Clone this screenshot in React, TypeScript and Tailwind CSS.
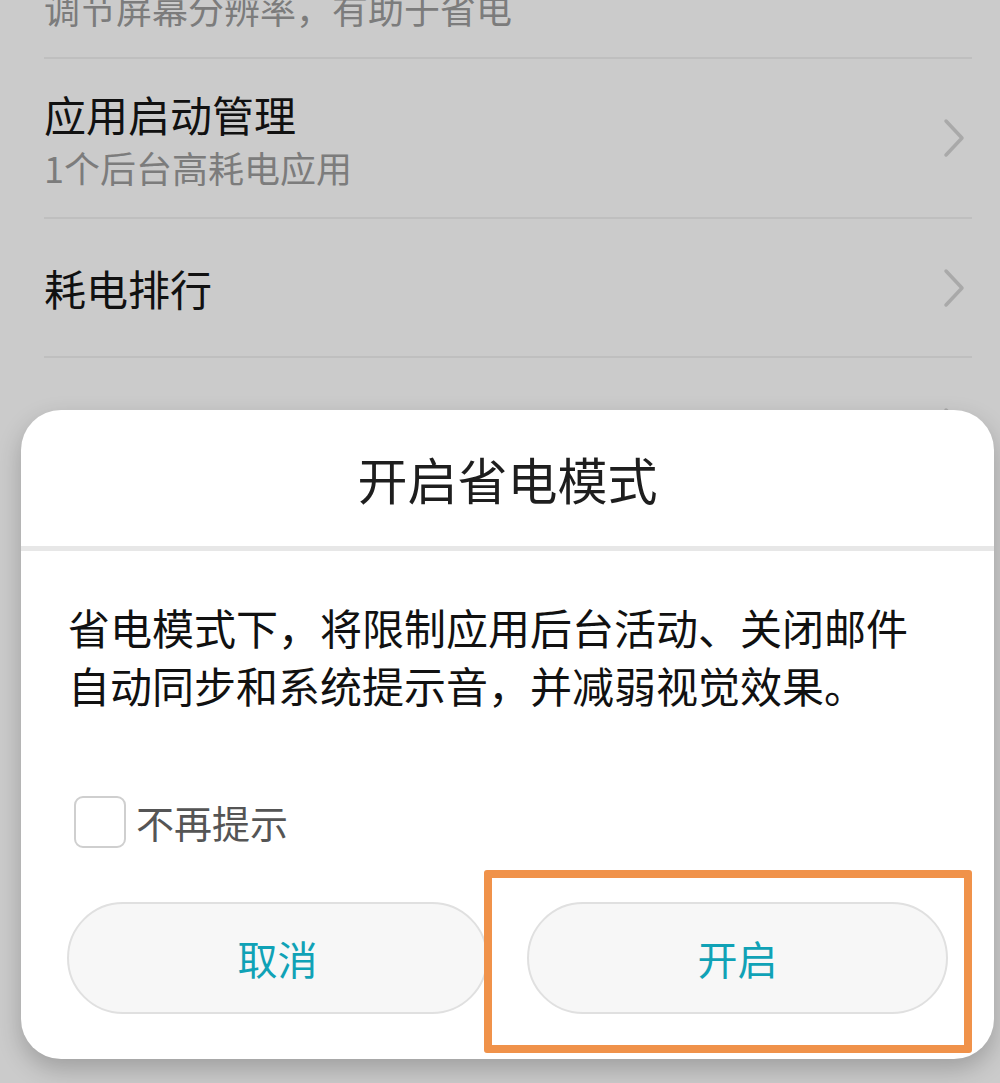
import React from 'react';

const font = { fontFamily: '"Noto Sans CJK SC", "Noto Sans", sans-serif' };

const Chevron = () => (
  <svg width="24" height="40" viewBox="0 0 24 40" className="shrink-0">
    <path d="M4 3 L20 20 L4 37" fill="none" stroke="#a9a9a9" strokeWidth="3.5" strokeLinecap="round" strokeLinejoin="round" />
  </svg>
);

const SettingRow = ({ title, subtitle, height }: any) => (
  <div className={`flex items-center justify-between pr-[6px] ${height}`}>
    <div className="flex flex-col">
      <span className="text-[42px] leading-[52px] text-[#111]">{title}</span>
      {subtitle && <span className="mt-[5px] text-[36px] leading-[44px] text-[#7c7c7c]">{subtitle}</span>}
    </div>
    <Chevron />
  </div>
);

const Divider = () => <div className="h-[2px] bg-[#bfbfbf]" />;

export default function App() {
  return (
    <div className="relative h-[1083px] w-[1000px] overflow-hidden bg-[#cbcbcb]" style={font}>
      {/* settings list behind the dialog */}
      <div className="flex flex-col pl-[44px] pr-[28px]">
        <div className="flex h-[57px] flex-col">
          <span className="-mt-[14px] text-[36px] leading-[44px] text-[#7c7c7c]">调节屏幕分辨率，有助于省电</span>
        </div>
        <Divider />
        <SettingRow title="应用启动管理" subtitle="1个后台高耗电应用" height="h-[158px]" />
        <Divider />
        <SettingRow title="耗电排行" height="h-[137px]" />
        <Divider />
        <div className="flex h-[137px] items-center justify-end pr-[6px]">
          <Chevron />
        </div>
      </div>

      {/* dialog */}
      <div className="absolute left-[21px] top-[410px] flex w-[973px] flex-col rounded-[40px] bg-white shadow-[0_10px_24px_rgba(0,0,0,0.22)]">
        <div className="flex h-[136px] items-center justify-center">
          <span className="text-[50px] leading-[60px] text-[#1e1e1e]">开启省电模式</span>
        </div>
        <div className="h-[5px] bg-[#e7e7e7]" />
        <div className="pl-[47px] pr-[66px] pt-[47px]">
          <p className="text-[42px] leading-[58px] text-[#111]">
            省电模式下，将限制应用后台活动、关闭邮件自动同步和系统提示音，并减弱视觉效果。
          </p>
          <label className="mt-[82px] flex items-center gap-[10px] pl-[6px]">
            <span className="h-[52px] w-[52px] rounded-[9px] border-2 border-[#cfcfcf] bg-white" />
            <span className="text-[38px] leading-[52px] text-[#555]">不再提示</span>
          </label>
        </div>
        <div className="flex gap-[39px] px-[46px] pb-[45px] pt-[54px]">
          <button className="flex h-[112px] flex-1 items-center justify-center rounded-full border-2 border-[#e0e0e0] bg-[#f7f7f7] text-[40px] text-[#10a2b6]">
            取消
          </button>
          <button className="flex h-[112px] flex-1 items-center justify-center rounded-full border-2 border-[#e0e0e0] bg-[#f7f7f7] text-[40px] text-[#10a2b6]">
            开启
          </button>
        </div>
      </div>

      {/* annotation frame */}
      <div className="absolute left-[484px] top-[870px] h-[183px] w-[488px] rounded-[3px] border-[8px] border-[#f0924a]" />
    </div>
  );
}
